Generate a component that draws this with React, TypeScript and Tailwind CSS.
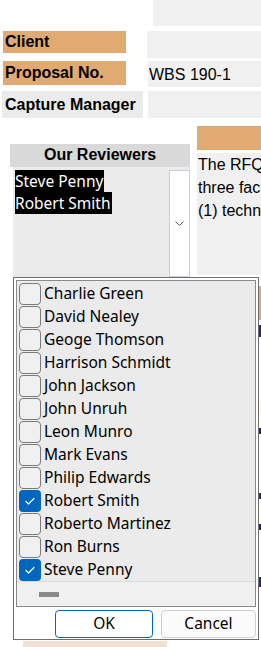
import React from 'react';

const reviewers = [
  { name: 'Charlie Green', checked: false },
  { name: 'David Nealey', checked: false },
  { name: 'Geoge Thomson', checked: false },
  { name: 'Harrison Schmidt', checked: false },
  { name: 'John Jackson', checked: false },
  { name: 'John Unruh', checked: false },
  { name: 'Leon Munro', checked: false },
  { name: 'Mark Evans', checked: false },
  { name: 'Philip Edwards', checked: false },
  { name: 'Robert Smith', checked: true },
  { name: 'Roberto Martinez', checked: false },
  { name: 'Ron Burns', checked: false },
  { name: 'Steve Penny', checked: true },
];

const arial = "font-['Liberation_Sans',Arial,sans-serif]";
const segoe = "font-['Noto_Sans','Open_Sans',sans-serif]";

function CheckBox({ checked }: { checked: boolean }) {
  if (checked) {
    return (
      <div className="w-[22px] h-[22px] rounded-[4px] bg-[#0067c0] flex items-center justify-center shrink-0">
        <svg width="12" height="10" viewBox="0 0 12 10" fill="none">
          <path d="M2 5.5l2.5 2.5L10 2.5" stroke="white" strokeWidth="1.2" strokeLinecap="round" strokeLinejoin="round" />
        </svg>
      </div>
    );
  }
  return <div className="w-[22px] h-[22px] rounded-[4px] border border-[#7a7a7a] bg-[#f0f0f0] shrink-0" />;
}

export default function App() {
  return (
    <div className={`relative w-[261px] h-[647px] bg-white overflow-hidden ${arial}`}>
      {/* Sheet */}
      <div className="flex h-[26px]">
        <div className="ml-[153px] flex-1 bg-[#f0f0f0]" />
      </div>

      <div className="flex mt-[5px] h-[27px]">
        <div className="ml-[3px] w-[123px] h-[22px] bg-[#e1aa73] pl-[2px] text-[16px] font-bold leading-[22px] text-black">
          Client
        </div>
        <div className="ml-[21px] flex-1 bg-[#f0f0f0]" />
      </div>

      <div className="flex mt-[3px] h-[26px]">
        <div className="ml-[3px] w-[123px] h-[24px] bg-[#e1aa73] pl-[2px] text-[16px] font-bold leading-[24px] text-black">
          Proposal No.
        </div>
        <div className="ml-[22px] flex-1 bg-[#f0f0f0] pl-[1px] text-[16px] leading-[28px] text-black">
          WBS 190-1
        </div>
      </div>

      <div className="flex mt-[4px] h-[27px]">
        <div className="ml-[2px] w-[141px] bg-[#ebebeb] pl-[3px] text-[16px] font-bold leading-[27px] text-black whitespace-nowrap">
          Capture Manager
        </div>
        <div className="ml-[5px] flex-1 bg-[#f0f0f0]" />
      </div>

      <div className="flex mt-[8px]">
        <div className="flex flex-col">
          <div className="mt-[18px] ml-[10px] w-[180px] h-[23px] bg-[#d9d9d9] text-center text-[16px] font-bold leading-[21px] text-black">
            Our Reviewers
          </div>
          <div className="ml-[13px] w-[177px] h-[110px] bg-[#ebebeb] flex">
            <div className={`flex-1 pt-[3px] pl-[2px] text-[15.5px] ${segoe}`}>
              <div className="h-[22px]"><span className="inline-block h-[22px] leading-[22px] bg-black text-white pr-[1px]">Steve Penny</span></div>
              <div className="h-[22px]"><span className="inline-block h-[22px] leading-[22px] bg-black text-white pr-[1px]">Robert Smith</span></div>
            </div>
            <div className="mt-[3px] w-[21px] bg-white border border-[#c5d0de] flex items-center justify-center">
              <svg width="9" height="5" viewBox="0 0 9 5" fill="none">
                <path d="M0.5 0.5L4.5 4.5L8.5 0.5" stroke="#555" strokeWidth="1" />
              </svg>
            </div>
          </div>
        </div>
        <div className="ml-[7px] flex-1 flex flex-col">
          <div className="h-[24px] bg-[#e1aa73]" />
          <div className="mt-[3px] h-[122px] bg-[#f0f0f0] pl-[1px] text-[16px] leading-[23px] text-black whitespace-nowrap overflow-hidden">
            <div>The RFQ</div>
            <div>three fac</div>
            <div>(1) techn</div>
          </div>
        </div>
      </div>

      {/* Sheet content behind the popup, peeking out at the right edge */}
      <div className="absolute left-[258px] top-[286px] w-[3px] h-[34px] bg-[#e1aa73]" />
      <div className="absolute left-[258px] top-[325px] w-[3px] h-[12px] bg-[#1c2b7a]" />
      <div className="absolute left-[258px] top-[400px] w-[3px] h-[12px] bg-[#ffffcc]" />
      <div className="absolute left-[258px] top-[428px] w-[3px] h-[6px] bg-[#1c2b7a]" />
      <div className="absolute left-[258px] top-[493px] w-[3px] h-[6px] bg-[#1c2b7a]" />
      <div className="absolute left-[258px] top-[524px] w-[3px] h-[6px] bg-[#1c2b7a]" />
      <div className="absolute left-[258px] top-[577px] w-[3px] h-[10px] bg-[#1c2b7a]" />
      <div className="absolute left-[23px] top-[641px] w-[144px] h-[6px] bg-[#f3e1d3]" />

      {/* Popup */}
      <div className={`absolute left-[13px] top-[277px] w-[246px] h-[363px] bg-white border border-[#6e6e6e] ${segoe}`}>
        <div className="mx-[2px] mt-[2px] h-[327px] border border-[#8a8a8a] bg-[#ebebeb] flex flex-col">
          <div className="pl-[2px] pt-[1px]">
            {reviewers.map((r) => (
              <div key={r.name} className="h-[23px] flex items-center gap-[3px]">
                <CheckBox checked={r.checked} />
                <span className="text-[15.5px] leading-[23px] text-black whitespace-nowrap">{r.name}</span>
              </div>
            ))}
          </div>
          <div className="mt-auto h-[25px] border-t border-[#dcdcdc] bg-[#f0f0f0] flex items-center">
            <div className="ml-[22px] w-[20px] h-[5px] bg-[#8a8a8a]" />
          </div>
        </div>
        <div className="flex justify-end gap-[8px] pr-[2px] pt-[3px]">
          <button className="w-[98px] h-[28px] rounded-[4px] border border-[#0067c0] bg-white text-[15.5px] text-black">
            OK
          </button>
          <button className="w-[95px] h-[28px] rounded-[4px] border border-[#cfcfcf] bg-[#fbfbfb] text-[15.5px] text-black">
            Cancel
          </button>
        </div>
      </div>
    </div>
  );
}
